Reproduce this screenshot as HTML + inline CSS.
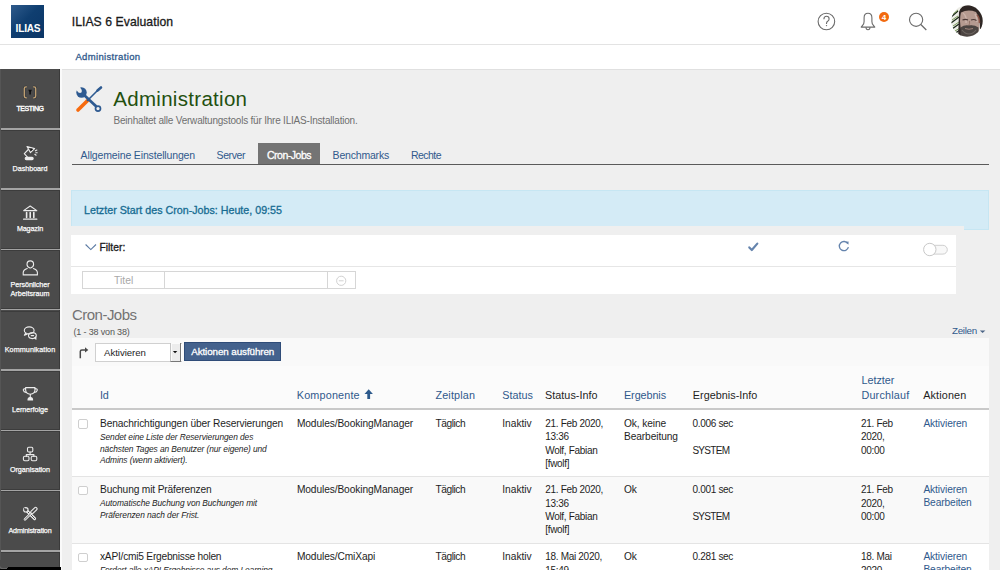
<!DOCTYPE html>
<html><head><meta charset="utf-8"><title>ILIAS 6 Evaluation - Administration</title>
<style>
html,body{margin:0;padding:0;width:1000px;height:570px;overflow:hidden;background:#efefef;}
body{position:relative;font-family:"Liberation Sans", sans-serif;}
.t{position:absolute;white-space:nowrap;}
.n{}
.s{-webkit-text-stroke:0.3px currentColor;}
.r{position:absolute;}
</style></head><body>
<div class="r" style="left:0px;top:0px;width:1000px;height:44px;background:#fff;"></div>
<div class="r" style="left:0px;top:43.5px;width:1000px;height:1.5px;background:#e3e3e3;"></div>
<div class="r" style="left:0px;top:45px;width:1000px;height:24px;background:#fff;"></div>
<div class="r" style="left:11.3px;top:4.8px;width:32.7px;height:32.8px;background:linear-gradient(135deg,#2f5b8c 0%,#0f3e70 45%,#0b3566 100%);"></div>
<div class="t" style="left:15.6px;top:23.87px;font-size:10.2px;line-height:10.2px;color:#fff;font-weight:bold;letter-spacing:-0.249px;">ILIAS</div>
<div class="t s" style="left:71.7px;top:15.77px;font-size:12.2px;line-height:12.2px;color:#1a1a1a;letter-spacing:0.062px;">ILIAS 6 Evaluation</div>
<svg class="r" style="left:800px;top:0;width:200px;height:44px" viewBox="800 0 200 44">
<circle cx="826.4" cy="21.5" r="8.3" fill="none" stroke="#6b6b6b" stroke-width="1.1"/>
<path d="M823.9 19.3 q0-3 2.6-3 q2.6 0 2.6 2.6 q0 1.5-1.4 2.3 q-1.2 0.7-1.2 2.2 v0.5" fill="none" stroke="#6b6b6b" stroke-width="1.1"/>
<circle cx="826.5" cy="25.6" r="0.7" fill="#6b6b6b"/>
<path d="M862.6 25.4 q1.5-1.6 1.5-4 v-3.6 q0-4.5 3.9-4.5 q3.9 0 3.9 4.5 v3.6 q0 2.4 1.5 4 l1.4 1.7 h-13.6 z" fill="none" stroke="#6b6b6b" stroke-width="1.1" stroke-linejoin="round"/>
<path d="M866 27.3 q0 2.4 2 2.4 q2 0 2-2.4" fill="none" stroke="#6b6b6b" stroke-width="1.1"/>
<circle cx="884" cy="17" r="5" fill="#f26a10"/>
<text x="884" y="20" font-family="Liberation Sans" font-weight="bold" font-size="8" fill="#fff" text-anchor="middle">4</text>
<circle cx="916.1" cy="19.8" r="6.6" fill="none" stroke="#6b6b6b" stroke-width="1.1"/>
<path d="M920.8 24.5 L926.3 30" stroke="#6b6b6b" stroke-width="1.2"/>
<defs><clipPath id="av"><circle cx="967" cy="21" r="15.7"/></clipPath></defs>
<g clip-path="url(#av)">
<rect x="950" y="4" width="34" height="34" fill="#ecece6"/>
<path d="M951 17 l7 -6 M951 23 l8 -6 M952 29 l7 -5 M954 34 l6 -4" stroke="#1e2a1c" stroke-width="1.4"/>
<path d="M953 14 l5 -4 M952 20 l6 -4 M953 26 l6 -4 M955 31 l5 -3" stroke="#7a9a5a" stroke-width="1"/>
<path d="M959 12 q2 -7 10 -7 q11 0 14 10 v14 l-3 0 q0 -9 -3 -13 q-7 -3 -14 0 q-2 4 -2 10 v16 h-3 z" fill="#2e2624"/>
<path d="M961 12.5 q7 -3.5 15 -0.5 q3.5 5 3.5 13 q0 6 -2 8 h-15.5 q-2 -6 -2 -12 q0 -5 1 -8.5 z" fill="#b59a90"/>
<path d="M963 13 q4 3 3 10 M975 14 q2 3 2 8" stroke="#cbb3aa" stroke-width="1.5" fill="none"/>
<path d="M962.5 20 q3 -1.2 5.5 0 M971 20 q3 -1.2 5.5 0.5" stroke="#4a3836" stroke-width="1.2" fill="none"/>
<path d="M969.5 21 q0.5 3 -0.8 4.5 q1.5 0.8 3 0" stroke="#8a6a60" stroke-width="0.8" fill="none"/>
<path d="M960.5 27.5 q4 -3 8.5 -2 q5 -1 9.5 2 v11 h-18 z" fill="#4c4542"/>
<path d="M962 30 q3 4 7 4 q4 0 7 -4" stroke="#6e6662" stroke-width="1.2" fill="none"/>
<path d="M965 28.5 q4 1.5 8 0" stroke="#a88a80" stroke-width="0.9" fill="none"/>
<path d="M977 15 q2.5 2 2.5 8" stroke="#8a5446" stroke-width="1.5" fill="none"/>
</g>
</svg>
<div class="t s" style="left:75.4px;top:51.96px;font-size:9.5px;line-height:9.5px;color:#30598c;letter-spacing:0.343px;">Administration</div>
<div class="r" style="left:0px;top:69px;width:60px;height:501px;background:#4b4b4b;"></div>
<div class="r" style="left:60px;top:69px;width:2px;height:501px;background:#fafafa;"></div>
<div class="r" style="left:59px;top:69px;width:1px;height:501px;background:#3a3a3a;"></div>
<div class="r" style="left:0px;top:127.5px;width:60px;height:0.6px;background:#3c3c3c;"></div>
<div class="r" style="left:0px;top:128.0px;width:60px;height:1.6px;background:#a4a4a4;"></div>
<div class="r" style="left:0px;top:129.6px;width:60px;height:0.6px;background:#3c3c3c;"></div>
<div class="r" style="left:0px;top:187.8px;width:60px;height:0.6px;background:#3c3c3c;"></div>
<div class="r" style="left:0px;top:188.3px;width:60px;height:1.6px;background:#a4a4a4;"></div>
<div class="r" style="left:0px;top:189.9px;width:60px;height:0.6px;background:#3c3c3c;"></div>
<div class="r" style="left:0px;top:248.1px;width:60px;height:0.6px;background:#3c3c3c;"></div>
<div class="r" style="left:0px;top:248.6px;width:60px;height:1.6px;background:#a4a4a4;"></div>
<div class="r" style="left:0px;top:250.2px;width:60px;height:0.6px;background:#3c3c3c;"></div>
<div class="r" style="left:0px;top:308.4px;width:60px;height:0.6px;background:#3c3c3c;"></div>
<div class="r" style="left:0px;top:308.9px;width:60px;height:1.6px;background:#a4a4a4;"></div>
<div class="r" style="left:0px;top:310.5px;width:60px;height:0.6px;background:#3c3c3c;"></div>
<div class="r" style="left:0px;top:368.7px;width:60px;height:0.6px;background:#3c3c3c;"></div>
<div class="r" style="left:0px;top:369.2px;width:60px;height:1.6px;background:#a4a4a4;"></div>
<div class="r" style="left:0px;top:370.8px;width:60px;height:0.6px;background:#3c3c3c;"></div>
<div class="r" style="left:0px;top:429.0px;width:60px;height:0.6px;background:#3c3c3c;"></div>
<div class="r" style="left:0px;top:429.5px;width:60px;height:1.6px;background:#a4a4a4;"></div>
<div class="r" style="left:0px;top:431.1px;width:60px;height:0.6px;background:#3c3c3c;"></div>
<div class="r" style="left:0px;top:489.3px;width:60px;height:0.6px;background:#3c3c3c;"></div>
<div class="r" style="left:0px;top:489.8px;width:60px;height:1.6px;background:#a4a4a4;"></div>
<div class="r" style="left:0px;top:491.4px;width:60px;height:0.6px;background:#3c3c3c;"></div>
<div class="r" style="left:0px;top:549.6px;width:60px;height:0.6px;background:#3c3c3c;"></div>
<div class="r" style="left:0px;top:550.1px;width:60px;height:1.6px;background:#a4a4a4;"></div>
<div class="r" style="left:0px;top:551.7px;width:60px;height:0.6px;background:#3c3c3c;"></div>
<div class="t" style="left:16.55px;top:104.57px;font-size:7px;line-height:7px;color:#fafafa;letter-spacing:-0.492px;-webkit-text-stroke:0.4px #fafafa;">TESTING</div>
<div class="t" style="left:12.600000000000001px;top:164.71px;font-size:7.2px;line-height:7.2px;color:#fafafa;letter-spacing:-0.041px;-webkit-text-stroke:0.25px #fafafa;">Dashboard</div>
<div class="t" style="left:16.9px;top:225.01px;font-size:7.2px;line-height:7.2px;color:#fafafa;letter-spacing:-0.139px;-webkit-text-stroke:0.25px #fafafa;">Magazin</div>
<div class="t" style="left:10.5px;top:280.71px;font-size:7.2px;line-height:7.2px;color:#fafafa;letter-spacing:-0.079px;-webkit-text-stroke:0.25px #fafafa;">Persönlicher</div>
<div class="t" style="left:10.5px;top:289.71px;font-size:7.2px;line-height:7.2px;color:#fafafa;letter-spacing:0.023px;-webkit-text-stroke:0.25px #fafafa;">Arbeitsraum</div>
<div class="t" style="left:4.75px;top:345.61px;font-size:7.2px;line-height:7.2px;color:#fafafa;letter-spacing:0.073px;-webkit-text-stroke:0.25px #fafafa;">Kommunikation</div>
<div class="t" style="left:12.0px;top:405.91px;font-size:7.2px;line-height:7.2px;color:#fafafa;letter-spacing:-0.034px;-webkit-text-stroke:0.25px #fafafa;">Lernerfolge</div>
<div class="t" style="left:10.0px;top:466.21px;font-size:7.2px;line-height:7.2px;color:#fafafa;letter-spacing:-0.064px;-webkit-text-stroke:0.25px #fafafa;">Organisation</div>
<div class="t" style="left:8.5px;top:526.51px;font-size:7.2px;line-height:7.2px;color:#fafafa;letter-spacing:-0.182px;-webkit-text-stroke:0.25px #fafafa;">Administration</div>
<svg class="r" style="left:0;top:69px;width:60px;height:501px" viewBox="0 69 60 501">
<g fill="none" stroke="#2e3238" stroke-width="2.6" opacity="0.6">
<path d="M26.8 86.8 h-0.8 q-1.7 0 -1.7 1.7 v7.6 q0 1.7 1.7 1.7 h0.8"/><path d="M33.2 86.8 h0.8 q1.7 0 1.7 1.7 v7.6 q0 1.7 -1.7 1.7 h-0.8"/>
</g>
<g fill="none" stroke="#c6a574" stroke-width="1.3">
<path d="M26.8 86.8 h-0.8 q-1.7 0 -1.7 1.7 v7.6 q0 1.7 1.7 1.7 h0.8"/><path d="M33.2 86.8 h0.8 q1.7 0 1.7 1.7 v7.6 q0 1.7 -1.7 1.7 h-0.8"/>
</g>
<path d="M28.3 89.8 h3.6 l-1 2.2 v2.4 h-1.6 v-2.4 z" fill="#111"/>
<g fill="none" stroke="#ececec" stroke-width="1.1" stroke-linejoin="round" stroke-linecap="round">
<path d="M27 146.6 L34.6 148.6 L30.4 152.6 Z"/>
<path d="M28.3 149.5 L24.3 153.6 L27.5 157.2"/>
<path d="M35.4 150.8 l1.5 -0.8 M35.8 152.7 l1.4 0 M34.8 154.3 l1.3 0.9"/>
<rect x="25.2" y="157.4" width="8" height="2.2" rx="1.1" fill="#ececec"/>
<path d="M23.6 210.6 L30.2 206 L36.8 210.6 Z"/>
<path d="M26.6 212.5 v5 M30.2 212.5 v5 M33.8 212.5 v5" stroke-width="1.6"/>
<path d="M23.6 219.2 h13.2" stroke-width="1.3"/>
<path d="M27 268 q-3 -1 -3 -3.5 q0 -3.6 3.3 -3.6 q3.3 0 3.3 3.6 q0 2.5 -3 3.5" transform="translate(3 0)"/>
<path d="M27.2 268.6 q-3.8 1.2 -4 4 v2.3 h14.2 v-2.3 q-0.2 -2.8 -4 -4"/>
<ellipse cx="29.2" cy="330.4" rx="4.9" ry="3.5"/>
<path d="M25.8 332.8 l-1.4 2.4 l2.8 -1" fill="#ececec"/>
<ellipse cx="32.4" cy="335.6" rx="3.9" ry="3"/>
<path d="M34.6 337.8 l1.4 1.4 l-0.3 -2.3" fill="#ececec"/>
<path d="M31.2 335.6 h2.4" stroke-width="1.2"/>
<path d="M25.6 387.6 h9.4 v2 q0 4.6 -4.7 4.6 q-4.7 0 -4.7 -4.6 z"/>
<path d="M25.6 388.6 q-2.5 0 -2.3 1.6 q0.4 2 2.8 2.3 M35 388.6 q2.5 0 2.3 1.6 q-0.4 2 -2.8 2.3"/>
<path d="M30.3 394.2 v3.2 M28 400 q0 -2.2 2.3 -2.6 q2.3 0.4 2.3 2.6 z" fill="#ececec"/>
<rect x="27.5" y="447.2" width="5.3" height="4.8" rx="1.2"/>
<path d="M30.1 452 v2.6 M26.3 456.4 v-1.8 h7.6 v1.8"/>
<rect x="23.4" y="456.3" width="5.6" height="4.4" rx="1.4"/>
<rect x="31.2" y="456.3" width="5.6" height="4.4" rx="1.4"/>
<path d="M26.5 510.5 L34.6 518.6" stroke-width="3"/>
<path d="M26.5 510.5 L34.6 518.6" stroke="#4b4b4b" stroke-width="1"/>
<circle cx="25.8" cy="509.8" r="2.8" fill="#ececec" stroke="none"/>
<circle cx="25.8" cy="509.8" r="1.6" fill="#4b4b4b" stroke="none"/>
<path d="M24.6 507.4 l-1.2 1.8 l2 0.6 z" fill="#4b4b4b" stroke="none"/>
<path d="M25 519.4 L31 513.4" stroke-width="2.6"/>
<path d="M25 519.4 L31 513.4" stroke="#4b4b4b" stroke-width="0.8"/>
<path d="M32.2 512.2 L35.6 508.8" stroke-width="4"/>
<path d="M32.2 512.2 L35.6 508.8" stroke="#4b4b4b" stroke-width="1.8"/>
</g>
<path d="M30.4 148.2 l2.6 0.7 l-2.3 2.2 z" fill="#161616"/>
</svg>
<div class="r" style="left:0px;top:567px;width:61px;height:3px;background:#000;"></div>
<div class="r" style="left:0;top:560px;width:8px;height:7.5px;background:#4b4b4b;border-bottom-left-radius:3px;box-shadow:-1px 1px 0 #666"></div>
<div class="r" style="left:0px;top:69px;width:1px;height:491px;background:#555;"></div>
<div class="r" style="left:62px;top:69px;width:938px;height:1px;background:#e0e0e0;"></div>
<svg class="r" style="left:70px;top:82px;width:38px;height:34px" viewBox="70 82 38 34">
<line x1="78" y1="110" x2="87.6" y2="100.4" stroke="#f76b0f" stroke-width="3.6" stroke-linecap="round"/>
<line x1="87" y1="101" x2="99" y2="89" stroke="#2e5a91" stroke-width="1.6"/>
<line x1="97.5" y1="90.5" x2="101" y2="87.5" stroke="#2e5a91" stroke-width="2.6" stroke-linecap="round"/>
<line x1="83" y1="94" x2="96.3" y2="106.5" stroke="#2e5a91" stroke-width="2.8"/>
<circle cx="98" cy="108.6" r="2.5" fill="#f0f0f0" stroke="#2e5a91" stroke-width="1.7"/>
<circle cx="81.5" cy="92.5" r="5.2" fill="#2e5a91"/>
<circle cx="80" cy="91" r="1.9" fill="#efefef"/>
<path d="M78.6 92.4 L74.5 88.3 L78.4 84.4 L81.4 89.6 Z" fill="#efefef"/>
</svg>
<div class="t n" style="left:113.3px;top:88.65px;font-size:20.5px;line-height:20.5px;color:#23500f;letter-spacing:0.294px;">Administration</div>
<div class="t n" style="left:113.5px;top:116.23px;font-size:10px;line-height:10px;color:#707070;letter-spacing:-0.210px;">Beinhaltet alle Verwaltungstools für Ihre ILIAS-Installation.</div>
<div class="r" style="left:258px;top:143px;width:62px;height:21px;background:#747474;"></div>
<div class="r" style="left:72px;top:163.7px;width:916.5px;height:1.6px;background:#5a5a5a;"></div>
<div class="t n" style="left:80.6px;top:149.71px;font-size:10.5px;line-height:10.5px;color:#30598c;letter-spacing:-0.147px;">Allgemeine Einstellungen</div>
<div class="t n" style="left:216.6px;top:149.71px;font-size:10.5px;line-height:10.5px;color:#30598c;letter-spacing:-0.423px;">Server</div>
<div class="t s" style="left:267px;top:149.71px;font-size:10.5px;line-height:10.5px;color:#fff;letter-spacing:-0.493px;">Cron-Jobs</div>
<div class="t n" style="left:332.6px;top:149.71px;font-size:10.5px;line-height:10.5px;color:#30598c;letter-spacing:-0.196px;">Benchmarks</div>
<div class="t n" style="left:411px;top:149.71px;font-size:10.5px;line-height:10.5px;color:#30598c;letter-spacing:-0.547px;">Rechte</div>
<div class="r" style="left:71px;top:190px;width:918px;height:39.5px;background:#d4ebf6;box-shadow: inset 0 0 0 1px #c6e6f3;"></div>
<div class="r" style="left:62px;top:226px;width:902px;height:9px;background:#efefef;"></div>
<div class="t s" style="left:84px;top:204.74px;font-size:10.7px;line-height:10.7px;color:#166b92;letter-spacing:0.004px;">Letzter Start des Cron-Jobs: Heute, 09:55</div>
<div class="r" style="left:71px;top:235px;width:885px;height:59px;background:#fff;"></div>
<div class="r" style="left:71px;top:265.6px;width:885px;height:1.2px;background:#e6e6e6;"></div>
<svg class="r" style="left:80px;top:238px;width:880px;height:56px" viewBox="80 238 880 56">
<path d="M85.6 244.5 L90.8 249.6 L96 244.5" fill="none" stroke="#5b7aa3" stroke-width="1.1"/>
<path d="M749.3 247.4 L751.8 250 L757.3 243.6" fill="none" stroke="#6584ad" stroke-width="2.2" stroke-linecap="round" stroke-linejoin="round"/>
<path d="M847.8 243.6 A4.6 4.6 0 1 0 848.4 247.2" fill="none" stroke="#6584ad" stroke-width="1.3"/>
<path d="M845.6 241.7 L848.6 241.6 L848.4 244.8 Z" fill="#6584ad"/>
<rect x="928.5" y="245.3" width="18.8" height="8.8" rx="4.4" fill="#f8f8f8" stroke="#cfcfcf" stroke-width="1"/>
<circle cx="929.8" cy="249.5" r="6.2" fill="#fff" stroke="#c8c8c8" stroke-width="1"/>
</svg>
<div class="t s" style="left:99.4px;top:242.78px;font-size:10.3px;line-height:10.3px;color:#1a1a1a;letter-spacing:0.036px;">Filter:</div>
<div class="r" style="left:82.2px;top:271.3px;width:271.5px;height:16.2px;border:1px solid #d6d6d6;background:#fff"></div>
<div class="r" style="left:164.3px;top:272.3px;width:1px;height:16.2px;background:#d6d6d6;"></div>
<div class="r" style="left:327px;top:272.3px;width:1px;height:16.2px;background:#d6d6d6;"></div>
<div class="t n" style="left:114px;top:276.28px;font-size:10.3px;line-height:10.3px;color:#a8a8a8;letter-spacing:0.064px;">Titel</div>
<svg class="r" style="left:332px;top:273px;width:20px;height:16px" viewBox="332 273 20 16"><circle cx="341.2" cy="280.8" r="4.6" fill="none" stroke="#d2d2d2" stroke-width="1"/><line x1="338.8" y1="280.8" x2="343.6" y2="280.8" stroke="#d2d2d2" stroke-width="1"/></svg>
<div class="t n" style="left:72px;top:307.20px;font-size:15px;line-height:15px;color:#737373;letter-spacing:-0.523px;">Cron-Jobs</div>
<div class="t n" style="left:73.5px;top:327.98px;font-size:9px;line-height:9px;color:#555;letter-spacing:-0.162px;">(1 - 38 von 38)</div>
<div class="t n" style="left:952px;top:326.00px;font-size:9.8px;line-height:9.8px;color:#30598c;letter-spacing:-0.298px;">Zeilen</div>
<svg class="r" style="left:978px;top:328px;width:10px;height:6px" viewBox="978 328 10 6"><path d="M979.8 330.4 h5.6 l-2.8 2.7 z" fill="#4c6586"/></svg>
<div class="r" style="left:71.5px;top:338px;width:917px;height:232px;background:#fff;"></div>
<div class="r" style="left:71.5px;top:338px;width:917px;height:28px;background:#f9f9f9;"></div>
<div class="r" style="left:71.5px;top:366px;width:917px;height:42px;background:#fbfbfb;"></div>
<svg class="r" style="left:76px;top:344px;width:16px;height:16px" viewBox="76 344 16 16"><path d="M80.3 358.2 V351.5 q0 -1.6 1.6 -1.6 H85.2" fill="none" stroke="#4a4a4a" stroke-width="1.5"/><path d="M85 347.2 L88.3 349.9 L85 352.6 Z" fill="#4a4a4a"/></svg>
<div class="r" style="left:94.6px;top:342.5px;width:87px;height:19.6px;border:1px solid #d0d0d0;border-right:none;background:#fff;box-sizing:border-box"></div>
<div class="r" style="left:170.1px;top:342.7px;width:10.8px;height:18.9px;background:#ececec;border-left:1px solid #c4c4c4;border-right:1.3px solid #777;border-bottom:1.3px solid #777;box-shadow:inset 1px 1px 0 #fafafa;box-sizing:border-box;"></div>
<svg class="r" style="left:172px;top:349px;width:8px;height:6px" viewBox="172 349 8 6"><path d="M172.9 350.9 h4.4 l-2.2 2.3 z" fill="#111"/></svg>
<div class="t n" style="left:104px;top:348.27px;font-size:9.6px;line-height:9.6px;color:#1e1e1e;letter-spacing:-0.023px;">Aktivieren</div>
<div class="r" style="left:184.4px;top:342.2px;width:96.4px;height:18.7px;background:#44628d;box-shadow:inset 0 0 0 1px #2f4c78;"></div>
<div class="t s" style="left:191.2px;top:346.90px;font-size:9.8px;line-height:9.8px;color:#fff;letter-spacing:-0.079px;">Aktionen ausführen</div>
<div class="t n" style="left:100px;top:390.06px;font-size:10.8px;line-height:10.8px;color:#30598c;letter-spacing:-0.308px;">Id</div>
<div class="t n" style="left:296.8px;top:390.06px;font-size:10.8px;line-height:10.8px;color:#30598c;letter-spacing:0.177px;">Komponente</div>
<svg class="r" style="left:362px;top:387px;width:14px;height:14px" viewBox="362 387 14 14"><path d="M368.7 389.3 L364.5 394 H367.3 V399 H370.1 V394 H372.9 Z" fill="#2d5a8c"/></svg>
<div class="t n" style="left:435.4px;top:390.06px;font-size:10.8px;line-height:10.8px;color:#30598c;letter-spacing:0.172px;">Zeitplan</div>
<div class="t n" style="left:502.2px;top:390.06px;font-size:10.8px;line-height:10.8px;color:#30598c;letter-spacing:-0.002px;">Status</div>
<div class="t n" style="left:545px;top:390.06px;font-size:10.8px;line-height:10.8px;color:#1e1e1e;letter-spacing:0.035px;">Status-Info</div>
<div class="t n" style="left:624px;top:390.06px;font-size:10.8px;line-height:10.8px;color:#30598c;letter-spacing:-0.078px;">Ergebnis</div>
<div class="t n" style="left:692.8px;top:390.06px;font-size:10.8px;line-height:10.8px;color:#1e1e1e;letter-spacing:0.029px;">Ergebnis-Info</div>
<div class="t n" style="left:861.4px;top:375.06px;font-size:10.8px;line-height:10.8px;color:#30598c;letter-spacing:-0.002px;">Letzter</div>
<div class="t n" style="left:861.4px;top:390.06px;font-size:10.8px;line-height:10.8px;color:#30598c;letter-spacing:0.198px;">Durchlauf</div>
<div class="t n" style="left:923.2px;top:390.06px;font-size:10.8px;line-height:10.8px;color:#1e1e1e;letter-spacing:0.146px;">Aktionen</div>
<div class="r" style="left:71.5px;top:408px;width:917px;height:2px;background:#c9c9c9;"></div>
<div class="r" style="left:71.5px;top:410px;width:917px;height:66px;background:#fff;"></div>
<div class="r" style="left:71.5px;top:476.5px;width:917px;height:67px;background:#f9f9f9;"></div>
<div class="r" style="left:71.5px;top:543.5px;width:917px;height:40px;background:#fff;"></div>
<div class="r" style="left:78px;top:419.3px;width:9.5px;height:9.5px;border:1px solid #cfcfcf;border-radius:2px;box-sizing:border-box;background:#fff"></div>
<div class="t n" style="left:100px;top:418.57px;font-size:10.2px;line-height:10.2px;color:#1e1e1e;letter-spacing:-0.132px;">Benachrichtigungen über Reservierungen</div>
<div class="t n" style="left:100px;top:432.79px;font-size:8.4px;line-height:8.4px;color:#1e1e1e;font-style:italic;letter-spacing:-0.080px;">Sendet eine Liste der Reservierungen des</div>
<div class="t n" style="left:100px;top:444.59px;font-size:8.4px;line-height:8.4px;color:#1e1e1e;font-style:italic;letter-spacing:-0.080px;">nächsten Tages an Benutzer (nur eigene) und</div>
<div class="t n" style="left:100px;top:456.39px;font-size:8.4px;line-height:8.4px;color:#1e1e1e;font-style:italic;letter-spacing:-0.080px;">Admins (wenn aktiviert).</div>
<div class="t n" style="left:296.9px;top:418.57px;font-size:10.2px;line-height:10.2px;color:#1e1e1e;letter-spacing:-0.100px;">Modules/BookingManager</div>
<div class="t n" style="left:435.5px;top:418.57px;font-size:10.2px;line-height:10.2px;color:#1e1e1e;letter-spacing:-0.463px;">Täglich</div>
<div class="t n" style="left:502.3px;top:418.57px;font-size:10.2px;line-height:10.2px;color:#1e1e1e;letter-spacing:-0.008px;">Inaktiv</div>
<div class="t n" style="left:545.2px;top:418.74px;font-size:10px;line-height:10px;color:#1e1e1e;letter-spacing:-0.300px;">21. Feb 2020,</div>
<div class="t n" style="left:545.2px;top:432.13px;font-size:10px;line-height:10px;color:#1e1e1e;letter-spacing:-0.300px;">13:36</div>
<div class="t n" style="left:545.2px;top:445.54px;font-size:10px;line-height:10px;color:#1e1e1e;letter-spacing:-0.300px;">Wolf, Fabian</div>
<div class="t n" style="left:545.2px;top:458.94px;font-size:10px;line-height:10px;color:#1e1e1e;letter-spacing:-0.300px;">[fwolf]</div>
<div class="t n" style="left:624px;top:418.57px;font-size:10.2px;line-height:10.2px;color:#1e1e1e;letter-spacing:-0.100px;">Ok, keine</div>
<div class="t n" style="left:624px;top:431.97px;font-size:10.2px;line-height:10.2px;color:#1e1e1e;letter-spacing:-0.100px;">Bearbeitung</div>
<div class="t n" style="left:692.4px;top:418.74px;font-size:10px;line-height:10px;color:#1e1e1e;letter-spacing:-0.300px;">0.006 sec</div>
<div class="t n" style="left:692.4px;top:445.54px;font-size:10px;line-height:10px;color:#1e1e1e;letter-spacing:-0.700px;">SYSTEM</div>
<div class="t n" style="left:861px;top:418.74px;font-size:10px;line-height:10px;color:#1e1e1e;letter-spacing:-0.300px;">21. Feb</div>
<div class="t n" style="left:861px;top:432.13px;font-size:10px;line-height:10px;color:#1e1e1e;letter-spacing:-0.300px;">2020,</div>
<div class="t n" style="left:861px;top:445.54px;font-size:10px;line-height:10px;color:#1e1e1e;letter-spacing:-0.300px;">00:00</div>
<div class="t n" style="left:923.4px;top:418.57px;font-size:10.2px;line-height:10.2px;color:#30598c;letter-spacing:-0.100px;">Aktivieren</div>
<div class="r" style="left:71.5px;top:476.0px;width:917px;height:1px;background:#e4e4e4;"></div>
<div class="r" style="left:78px;top:485.8px;width:9.5px;height:9.5px;border:1px solid #cfcfcf;border-radius:2px;box-sizing:border-box;background:#fff"></div>
<div class="t n" style="left:100px;top:485.07px;font-size:10.2px;line-height:10.2px;color:#1e1e1e;letter-spacing:-0.151px;">Buchung mit Präferenzen</div>
<div class="t n" style="left:100px;top:499.29px;font-size:8.4px;line-height:8.4px;color:#1e1e1e;font-style:italic;letter-spacing:-0.080px;">Automatische Buchung von Buchungen mit</div>
<div class="t n" style="left:100px;top:511.09px;font-size:8.4px;line-height:8.4px;color:#1e1e1e;font-style:italic;letter-spacing:-0.080px;">Präferenzen nach der Frist.</div>
<div class="t n" style="left:296.9px;top:485.07px;font-size:10.2px;line-height:10.2px;color:#1e1e1e;letter-spacing:-0.100px;">Modules/BookingManager</div>
<div class="t n" style="left:435.5px;top:485.07px;font-size:10.2px;line-height:10.2px;color:#1e1e1e;letter-spacing:-0.463px;">Täglich</div>
<div class="t n" style="left:502.3px;top:485.07px;font-size:10.2px;line-height:10.2px;color:#1e1e1e;letter-spacing:-0.008px;">Inaktiv</div>
<div class="t n" style="left:545.2px;top:485.24px;font-size:10px;line-height:10px;color:#1e1e1e;letter-spacing:-0.300px;">21. Feb 2020,</div>
<div class="t n" style="left:545.2px;top:498.63px;font-size:10px;line-height:10px;color:#1e1e1e;letter-spacing:-0.300px;">13:36</div>
<div class="t n" style="left:545.2px;top:512.03px;font-size:10px;line-height:10px;color:#1e1e1e;letter-spacing:-0.300px;">Wolf, Fabian</div>
<div class="t n" style="left:545.2px;top:525.43px;font-size:10px;line-height:10px;color:#1e1e1e;letter-spacing:-0.300px;">[fwolf]</div>
<div class="t n" style="left:624px;top:485.07px;font-size:10.2px;line-height:10.2px;color:#1e1e1e;letter-spacing:-0.100px;">Ok</div>
<div class="t n" style="left:692.4px;top:485.24px;font-size:10px;line-height:10px;color:#1e1e1e;letter-spacing:-0.300px;">0.001 sec</div>
<div class="t n" style="left:692.4px;top:512.03px;font-size:10px;line-height:10px;color:#1e1e1e;letter-spacing:-0.700px;">SYSTEM</div>
<div class="t n" style="left:861px;top:485.24px;font-size:10px;line-height:10px;color:#1e1e1e;letter-spacing:-0.300px;">21. Feb</div>
<div class="t n" style="left:861px;top:498.63px;font-size:10px;line-height:10px;color:#1e1e1e;letter-spacing:-0.300px;">2020,</div>
<div class="t n" style="left:861px;top:512.03px;font-size:10px;line-height:10px;color:#1e1e1e;letter-spacing:-0.300px;">00:00</div>
<div class="t n" style="left:923.4px;top:485.07px;font-size:10.2px;line-height:10.2px;color:#30598c;letter-spacing:-0.100px;">Aktivieren</div>
<div class="t n" style="left:923.4px;top:498.47px;font-size:10.2px;line-height:10.2px;color:#30598c;letter-spacing:-0.100px;">Bearbeiten</div>
<div class="r" style="left:71.5px;top:543.0px;width:917px;height:1px;background:#e4e4e4;"></div>
<div class="r" style="left:78px;top:552.8px;width:9.5px;height:9.5px;border:1px solid #cfcfcf;border-radius:2px;box-sizing:border-box;background:#fff"></div>
<div class="t n" style="left:100px;top:552.07px;font-size:10.2px;line-height:10.2px;color:#1e1e1e;letter-spacing:-0.235px;">xAPI/cmi5 Ergebnisse holen</div>
<div class="t n" style="left:100px;top:566.29px;font-size:8.4px;line-height:8.4px;color:#1e1e1e;font-style:italic;letter-spacing:-0.080px;">Fordert alle xAPI Ergebnisse aus dem Learning</div>
<div class="t n" style="left:296.9px;top:552.07px;font-size:10.2px;line-height:10.2px;color:#1e1e1e;letter-spacing:-0.100px;">Modules/CmiXapi</div>
<div class="t n" style="left:435.5px;top:552.07px;font-size:10.2px;line-height:10.2px;color:#1e1e1e;letter-spacing:-0.463px;">Täglich</div>
<div class="t n" style="left:502.3px;top:552.07px;font-size:10.2px;line-height:10.2px;color:#1e1e1e;letter-spacing:-0.008px;">Inaktiv</div>
<div class="t n" style="left:545.2px;top:552.24px;font-size:10px;line-height:10px;color:#1e1e1e;letter-spacing:-0.300px;">18. Mai 2020,</div>
<div class="t n" style="left:545.2px;top:565.63px;font-size:10px;line-height:10px;color:#1e1e1e;letter-spacing:-0.300px;">15:49</div>
<div class="t n" style="left:624px;top:552.07px;font-size:10.2px;line-height:10.2px;color:#1e1e1e;letter-spacing:-0.100px;">Ok</div>
<div class="t n" style="left:692.4px;top:552.24px;font-size:10px;line-height:10px;color:#1e1e1e;letter-spacing:-0.300px;">0.281 sec</div>
<div class="t n" style="left:861px;top:552.24px;font-size:10px;line-height:10px;color:#1e1e1e;letter-spacing:-0.300px;">18. Mai</div>
<div class="t n" style="left:861px;top:565.63px;font-size:10px;line-height:10px;color:#1e1e1e;letter-spacing:-0.300px;">2020,</div>
<div class="t n" style="left:923.4px;top:552.07px;font-size:10.2px;line-height:10.2px;color:#30598c;letter-spacing:-0.100px;">Aktivieren</div>
<div class="t n" style="left:923.4px;top:565.47px;font-size:10.2px;line-height:10.2px;color:#30598c;letter-spacing:-0.100px;">Bearbeiten</div>
</body></html>
